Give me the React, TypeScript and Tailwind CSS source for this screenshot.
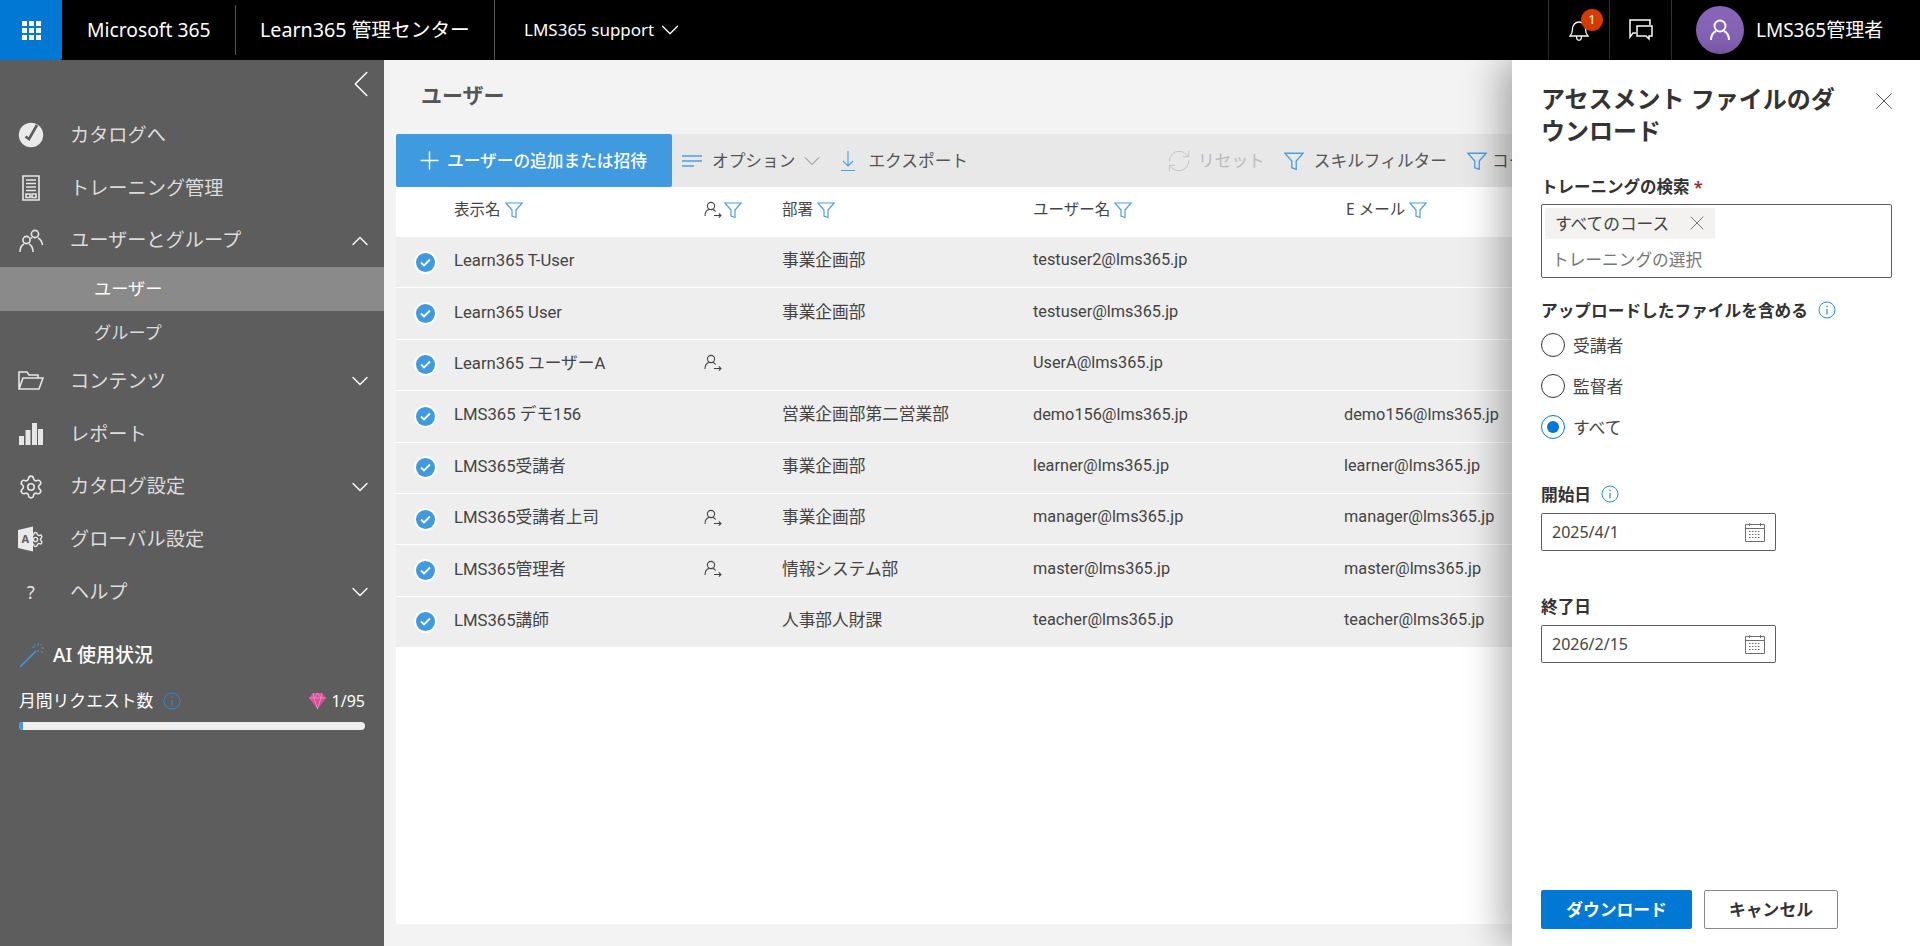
import { ChevronDown, ChevronLeft, ChevronUp, Plus, RefreshCw, Settings, X } from "lucide-react";

type Row = { name: string; delegate?: boolean; dept: string; user: string; email: string };

const rows: Row[] = [
  { name: "Learn365 T-User", dept: "事業企画部", user: "testuser2@lms365.jp", email: "" },
  { name: "Learn365 User", dept: "事業企画部", user: "testuser@lms365.jp", email: "" },
  { name: "Learn365 ユーザーA", delegate: true, dept: "", user: "UserA@lms365.jp", email: "" },
  { name: "LMS365 デモ156", dept: "営業企画部第二営業部", user: "demo156@lms365.jp", email: "demo156@lms365.jp" },
  { name: "LMS365受講者", dept: "事業企画部", user: "learner@lms365.jp", email: "learner@lms365.jp" },
  { name: "LMS365受講者上司", delegate: true, dept: "事業企画部", user: "manager@lms365.jp", email: "manager@lms365.jp" },
  { name: "LMS365管理者", delegate: true, dept: "情報システム部", user: "master@lms365.jp", email: "master@lms365.jp" },
  { name: "LMS365講師", dept: "人事部人財課", user: "teacher@lms365.jp", email: "teacher@lms365.jp" },
];

function Waffle() {
  return (
    <svg width="20" height="20" viewBox="0 0 20 20" fill="#fff">
      {[1, 8, 15].map((y) =>
        [1, 8, 15].map((x) => <rect key={`${x}-${y}`} x={x} y={y} width="5" height="5" />)
      )}
    </svg>
  );
}

function FilterIcon({ size = 18 }: { size?: number }) {
  return (
    <svg width={size} height={size} viewBox="0 0 18 18" fill="none" stroke="#4a9fe3" strokeWidth="1.2">
      <path d="M.8 2h16.400L11 9v7.500l-4-1.500V9z" />
    </svg>
  );
}

function DelegateIcon() {
  return (
    <svg width="18" height="18" viewBox="0 0 18 18" fill="none" stroke="#444" strokeWidth="1.1">
      <circle cx="7" cy="5" r="3.600" />
      <path d="M1 15c0-3.500 2-6 4-6.500M9 8.500c1 .3 2 1 2.600 2M10 14.500h7M14.800 12.300l2.200 2.200-2.200 2.200" />
    </svg>
  );
}

function InfoIcon({ size = 18 }: { size?: number }) {
  return (
    <svg width={size} height={size} viewBox="0 0 18 18" fill="none" stroke="#2b88d8" strokeWidth="1">
      <circle cx="9" cy="9" r="8" />
      <path d="M9 8v5.500" strokeWidth="1.200" />
      <circle cx="9" cy="5.400" r=".8" fill="#2b88d8" stroke="none" />
    </svg>
  );
}

function CalendarIcon() {
  return (
    <svg width="20" height="20" viewBox="0 0 20 20" fill="none" stroke="#6e6e6e" strokeWidth="1">
      <path d="M.5 2.500h19v17H.5zM.5 6.500h19M4.500 1v3M15.500 1v3" />
      <path d="M4 9.500h12M4 12.500h12M4 15.500h12" strokeDasharray="1.500 1.500" />
    </svg>
  );
}

function CheckCircle() {
  return (
    <span className="flex h-[19px] w-[19px] items-center justify-center rounded-full bg-[#3f9ae0] ring-2 ring-white">
      <svg width="11" height="9" viewBox="0 0 11 9" fill="none" stroke="#fff" strokeWidth="1.800">
        <path d="M1 4.500l3 3 6-6" />
      </svg>
    </span>
  );
}

const navIcons: Record<string, React.ReactNode> = {
  catalog: (
    <svg width="26" height="26" viewBox="0 0 26 26">
      <circle cx="13" cy="13" r="12.200" fill="#eaeaea" />
      <path d="M7.500 14.500l3.500 2.500L19 3" fill="none" stroke="#5d5d5d" strokeWidth="2.600" />
    </svg>
  ),
  training: (
    <svg width="22" height="26" viewBox="0 0 22 26" fill="none" stroke="#e6e6e6" strokeWidth="1.600">
      <path d="M3 1h16v24H3z" />
      <path d="M6 5h10M6 8.500h10M6 12h10M6 15.500h10" />
      <path d="M6 19h4v3.500H6zM12 19h4v3.500h-4z" />
    </svg>
  ),
  users: (
    <svg width="26" height="26" viewBox="0 0 26 26" fill="none" stroke="#e6e6e6" strokeWidth="1.600">
      <circle cx="17" cy="6" r="3.600" />
      <circle cx="8.500" cy="12" r="3.600" />
      <path d="M2 24c0-4 2-7 4-8M11 16c2 1 4 4 4 8M20 10c2 1 4 3 4.500 7M12.500 10.500c.5-.3 1-.5 1.500-.8" />
    </svg>
  ),
  content: (
    <svg width="26" height="22" viewBox="0 0 26 22" fill="none" stroke="#e6e6e6" strokeWidth="1.600">
      <path d="M1 19V2h8l2 3h9v3M1 19l4-11h20l-4 11z" />
    </svg>
  ),
  report: (
    <svg width="24" height="22" viewBox="0 0 24 22" fill="#e6e6e6">
      <rect x="0" y="13" width="5" height="9" />
      <rect x="6.500" y="7" width="5" height="15" />
      <rect x="13" y="0" width="5" height="22" />
      <rect x="19" y="6" width="5" height="16" />
    </svg>
  ),
  settings: <Settings size={28} strokeWidth={1.5} color="#e6e6e6" />,
  global: (
    <svg width="26" height="26" viewBox="0 0 26 26">
      <Settings x="9" y="5" width="17" height="17" strokeWidth={2} color="#e6e6e6" />
      <path d="M0 4l15-3.500v25L0 22z" fill="#eaeaea" />
      <text x="3.500" y="17" fontSize="11" fontWeight="700" fill="#5d5d5d" fontFamily="'Noto Sans'">A</text>
    </svg>
  ),
  help: <span className="text-[18px] text-[#e6e6e6]">?</span>,
};

function NavItem({ icon, label, caret }: { icon: string; label: string; caret?: "up" | "down" }) {
  return (
    <div className="flex h-[52.7px] items-center pr-[10px] pl-[18px] text-[#dcdcdc]">
      <span className="flex w-[26px] items-center justify-center">{navIcons[icon]}</span>
      <span className="ml-[26px] flex-1 text-[19.2px]">{label}</span>
      {caret === "up" && <ChevronUp size={28} strokeWidth={1.2} color="#fff" />}
      {caret === "down" && <ChevronDown size={28} strokeWidth={1.2} color="#fff" />}
    </div>
  );
}

function Sidebar() {
  return (
    <aside className="flex w-[384px] shrink-0 flex-col bg-[#5d5d5d]">
      <div className="flex h-[49px] items-center justify-end pb-[2px]">
        <ChevronLeft size={46} strokeWidth={0.8} color="#fff" />
      </div>
      <NavItem icon="catalog" label="カタログへ" />
      <NavItem icon="training" label="トレーニング管理" />
      <NavItem icon="users" label="ユーザーとグループ" caret="up" />
      <div className="flex h-[44px] items-center bg-[#8a8a8a] pl-[94px] text-[17.2px] text-white">ユーザー</div>
      <div className="flex h-[44px] items-center pl-[94px] text-[17.2px] text-[#dcdcdc]">グループ</div>
      <NavItem icon="content" label="コンテンツ" caret="down" />
      <NavItem icon="report" label="レポート" />
      <NavItem icon="settings" label="カタログ設定" caret="down" />
      <NavItem icon="global" label="グローバル設定" />
      <NavItem icon="help" label="ヘルプ" caret="down" />

      <div className="mt-[22px] flex items-center pl-[19px] text-white">
        <svg width="26" height="26" viewBox="0 0 26 26" fill="none" stroke="#3f9ae0" strokeWidth="1.300">
          <path d="M1 25L17 9" strokeWidth="1.600" />
          <path d="M19 1v3M19 8v2M13 5h3M22 6h3M15 2l1.500 1.500M23 2l-1.500 1.500M22 9l2 2" strokeWidth="1" />
        </svg>
        <span className="ml-[8px] text-[19px] font-medium">AI 使用状況</span>
      </div>
      <div className="mt-[19px] flex items-center px-[19px] text-white">
        <span className="text-[16.8px]">月間リクエスト数</span>
        <span className="ml-[10px]">
          <InfoIcon />
        </span>
        <svg className="ml-auto" width="17" height="16" viewBox="0 0 17 16">
          <path d="M4 0h9l4 5-8.500 11L0 5z" fill="#d94f9b" />
          <path d="M0 5h17M5 5l3.500 11L12 5M4 0l1 5 3.500-5L12 5l1-5" fill="none" stroke="#f3a6cf" strokeWidth=".6" />
        </svg>
        <span className="ml-[6px] text-[16px]">1/95</span>
      </div>
      <div className="mx-[19px] mt-[9px] h-[8px] overflow-hidden rounded-full bg-[#f0f0f0]">
        <div className="h-full w-[4px] bg-[#3f9ae0]" />
      </div>
    </aside>
  );
}

function HeaderCell({ label, className }: { label: string; className: string }) {
  return (
    <div className={`flex items-center gap-[4px] ${className}`}>
      <span>{label}</span>
      <FilterIcon />
    </div>
  );
}

function UsersTable() {
  return (
    <div className="flex-1 bg-white">
      <div className="flex h-[49px] items-center pb-[4px] text-[15.5px] text-[#444]">
        <HeaderCell label="表示名" className="ml-[58px] w-[250px]" />
        <div className="flex w-[78px] items-center gap-[2px]">
          <DelegateIcon />
          <FilterIcon />
        </div>
        <HeaderCell label="部署" className="w-[251px]" />
        <HeaderCell label="ユーザー名" className="w-[313px]" />
        <HeaderCell label="E メール" className="" />
      </div>
      {rows.map((r) => (
        <div key={r.user} className="flex h-[51.4px] items-center border-t border-white bg-[#eeeeee] text-[16.7px] text-[#444] font-['Roboto','Noto_Sans_CJK_JP',sans-serif]">
          <span className="flex w-[58px] justify-center">
            <CheckCircle />
          </span>
          <span className="w-[250px] pb-[3px]">{r.name}</span>
          <span className="w-[78px] pb-[3px]">{r.delegate && <DelegateIcon />}</span>
          <span className="w-[251px] pb-[3px]">{r.dept}</span>
          <span className="w-[311px] pb-[3px] text-[16.3px]">{r.user}</span>
          <span className="pb-[3px] text-[16.3px]">{r.email}</span>
        </div>
      ))}
    </div>
  );
}

function Toolbar() {
  return (
    <div className="flex h-[53px] items-center bg-[#e8e8e8] text-[16.7px] text-[#555]">
      <div className="flex h-full w-[276px] items-center rounded-[2px] bg-[#3f9ae0] pl-[19px] font-medium text-white">
        <Plus size={29} strokeWidth={1.2} />
        <span className="ml-[3px]">ユーザーの追加または招待</span>
      </div>
      <svg className="ml-[10px]" width="20" height="14" viewBox="0 0 20 14" stroke="#4a9fe3" strokeWidth="1.500">
        <path d="M0 2h20M0 7h20M0 12h12" />
      </svg>
      <span className="ml-[10px]">オプション</span>
      <ChevronDown className="ml-[3px]" size={28} strokeWidth={0.8} color="#777" />
      <svg className="ml-[15px]" width="14" height="20" viewBox="0 0 14 20" fill="none" stroke="#4a9fe3" strokeWidth="1.100">
        <path d="M7 0v15M2 10l5 5 5-5M0 19.500h14" />
      </svg>
      <span className="ml-[13px]">エクスポート</span>
      <RefreshCw className="ml-[198px]" size={26} strokeWidth={0.9} color="#c4c4c4" />
      <span className="ml-[6px] text-[#bbb]">リセット</span>
      <span className="ml-[19px]">
        <FilterIcon size={20} />
      </span>
      <span className="ml-[10px]">スキルフィルター</span>
      <span className="ml-[20px]">
        <FilterIcon size={20} />
      </span>
      <span className="ml-[5px] whitespace-nowrap">コース</span>
    </div>
  );
}

function Radio({ label, checked }: { label: string; checked?: boolean }) {
  return (
    <div className="flex h-[41px] items-center gap-[8px] text-[16.8px] text-[#444]">
      <span className={`flex h-[24px] w-[24px] items-center justify-center rounded-full border ${checked ? "border-[#0078d4]" : "border-[#333]"}`}>
        {checked && <span className="h-[12px] w-[12px] rounded-full bg-[#0078d4]" />}
      </span>
      {label}
    </div>
  );
}

function DateField({ value }: { value: string }) {
  return (
    <div className="mt-[6px] flex h-[38px] w-[235px] items-center justify-between rounded-[2px] border border-[#605e5c] pr-[10px] pl-[10px] text-[16px] text-[#444]">
      {value}
      <CalendarIcon />
    </div>
  );
}

function DownloadPanel() {
  return (
    <section className="absolute top-0 right-0 bottom-0 flex w-[408px] flex-col bg-white pr-[29px] pl-[29px] text-[#333] shadow-[-10px_0_36px_rgba(0,0,0,0.33)]">
      <div className="mt-[23px] flex items-start">
        <h2 className="w-[300px] text-[24px] leading-[32px] font-bold">アセスメント ファイルのダウンロード</h2>
        <X className="ml-auto mr-[-8px] mt-[3px]" size={30} strokeWidth={0.8} color="#555" />
      </div>
      <div className="mt-[28px] text-[16.5px] font-semibold">
        トレーニングの検索 <span className="text-[#a4262c]">*</span>
      </div>
      <div className="mt-[4px] h-[74px] w-[351px] rounded-[2px] border border-[#605e5c] p-[3px]">
        <div className="flex h-[31px] w-[170px] items-center justify-between rounded-[2px] bg-[#f3f2f1] pr-[6px] pl-[10px] text-[16.7px] text-[#444]">
          すべてのコース
          <X size={24} strokeWidth={0.8} color="#555" />
        </div>
        <div className="mt-[9px] pl-[7px] text-[16.7px] leading-[24px] text-[#777]">トレーニングの選択</div>
      </div>
      <div className="mt-[20px] flex items-center gap-[10px] text-[16.7px] font-semibold">
        アップロードしたファイルを含める
        <InfoIcon />
      </div>
      <div className="mt-[2px]">
        <Radio label="受講者" />
        <Radio label="監督者" />
        <Radio label="すべて" checked />
      </div>
      <div className="mt-[34px] flex items-center gap-[10px] text-[16.7px] font-semibold">
        開始日
        <InfoIcon />
      </div>
      <DateField value="2025/4/1" />
      <div className="mt-[43px] text-[16.7px] font-semibold">終了日</div>
      <DateField value="2026/2/15" />
      <div className="mt-auto mb-[17px] flex gap-[12px] text-[16.8px] font-bold">
        <button className="h-[39px] w-[151px] rounded-[2px] bg-[#0078d4] text-white">ダウンロード</button>
        <button className="h-[39px] w-[134px] rounded-[2px] border border-[#8a8886] bg-white text-[#333]">キャンセル</button>
      </div>
    </section>
  );
}

export default function App() {
  return (
    <div className="flex h-[946px] w-[1920px] flex-col overflow-hidden bg-[#f3f3f3] font-['Noto_Sans','Noto_Sans_CJK_JP',sans-serif]">
      <header className="flex h-[60px] shrink-0 items-center bg-black text-white">
        <div className="flex h-full w-[62px] items-center justify-center rounded-br-[2px] bg-[#0078d4]">
          <Waffle />
        </div>
        <div className="ml-[25px] w-[148px] text-[19.3px]">Microsoft 365</div>
        <div className="h-[50px] w-px bg-[#555]" />
        <div className="ml-[24px] w-[234px] text-[19.7px] whitespace-nowrap">Learn365 管理センター</div>
        <div className="h-full w-px bg-[#555]" />
        <div className="ml-[29px] flex items-center gap-[1px] text-[17px]">
          LMS365 support
          <ChevronDown size={30} strokeWidth={1} />
        </div>
        <div className="ml-auto flex h-full items-center">
          <div className="relative flex h-full w-[61px] items-center justify-center border-l border-[#333]">
            <svg width="20" height="24" viewBox="0 0 20 24" fill="none" stroke="#fff" strokeWidth="1.300">
              <path d="M1 18c2-2 2.500-4 2.500-7 0-4 3-7 6.500-7s6.500 3 6.500 7c0 3 .5 5 2.500 7zM7.500 18.500c0 5 5 5 5 0" />
            </svg>
            <span className="absolute top-[9px] left-[32px] flex h-[22px] w-[22px] items-center justify-center rounded-full bg-[#d83b01] text-[13px]">1</span>
          </div>
          <div className="flex h-full w-[62px] items-center justify-center border-l border-[#333]">
            <svg width="26" height="24" viewBox="0 0 26 24" fill="none" stroke="#fff" strokeWidth="1.500">
              <path d="M8 15H5l-3 4V2h20v5M9 8h15v10h-3v3l-3-3H9z" />
            </svg>
          </div>
          <div className="flex h-full w-[249px] items-center border-l border-[#333] pl-[24px]">
            <span className="flex h-[48px] w-[48px] items-center justify-center rounded-full bg-[#8764b8]">
              <svg width="24" height="24" viewBox="0 0 24 24" fill="none" stroke="#fff" strokeWidth="2">
                <circle cx="12" cy="8" r="5.500" />
                <path d="M3 22c0-5 3-8 5-9M21 22c0-5-3-8-5-9" />
              </svg>
            </span>
            <span className="ml-[12px] text-[19px]">LMS365管理者</span>
          </div>
        </div>
      </header>

      <div className="relative flex min-h-0 flex-1">
        <Sidebar />
        <main className="flex min-w-0 flex-1 flex-col overflow-hidden pl-[12px]">
          <h1 className="flex h-[74px] shrink-0 items-center pb-[2px] pl-[25px] text-[21px] font-semibold text-[#555]">ユーザー</h1>
          <div className="mb-[22px] flex min-h-0 flex-1 flex-col">
            <Toolbar />
            <UsersTable />
          </div>
        </main>
        <DownloadPanel />
      </div>
    </div>
  );
}
